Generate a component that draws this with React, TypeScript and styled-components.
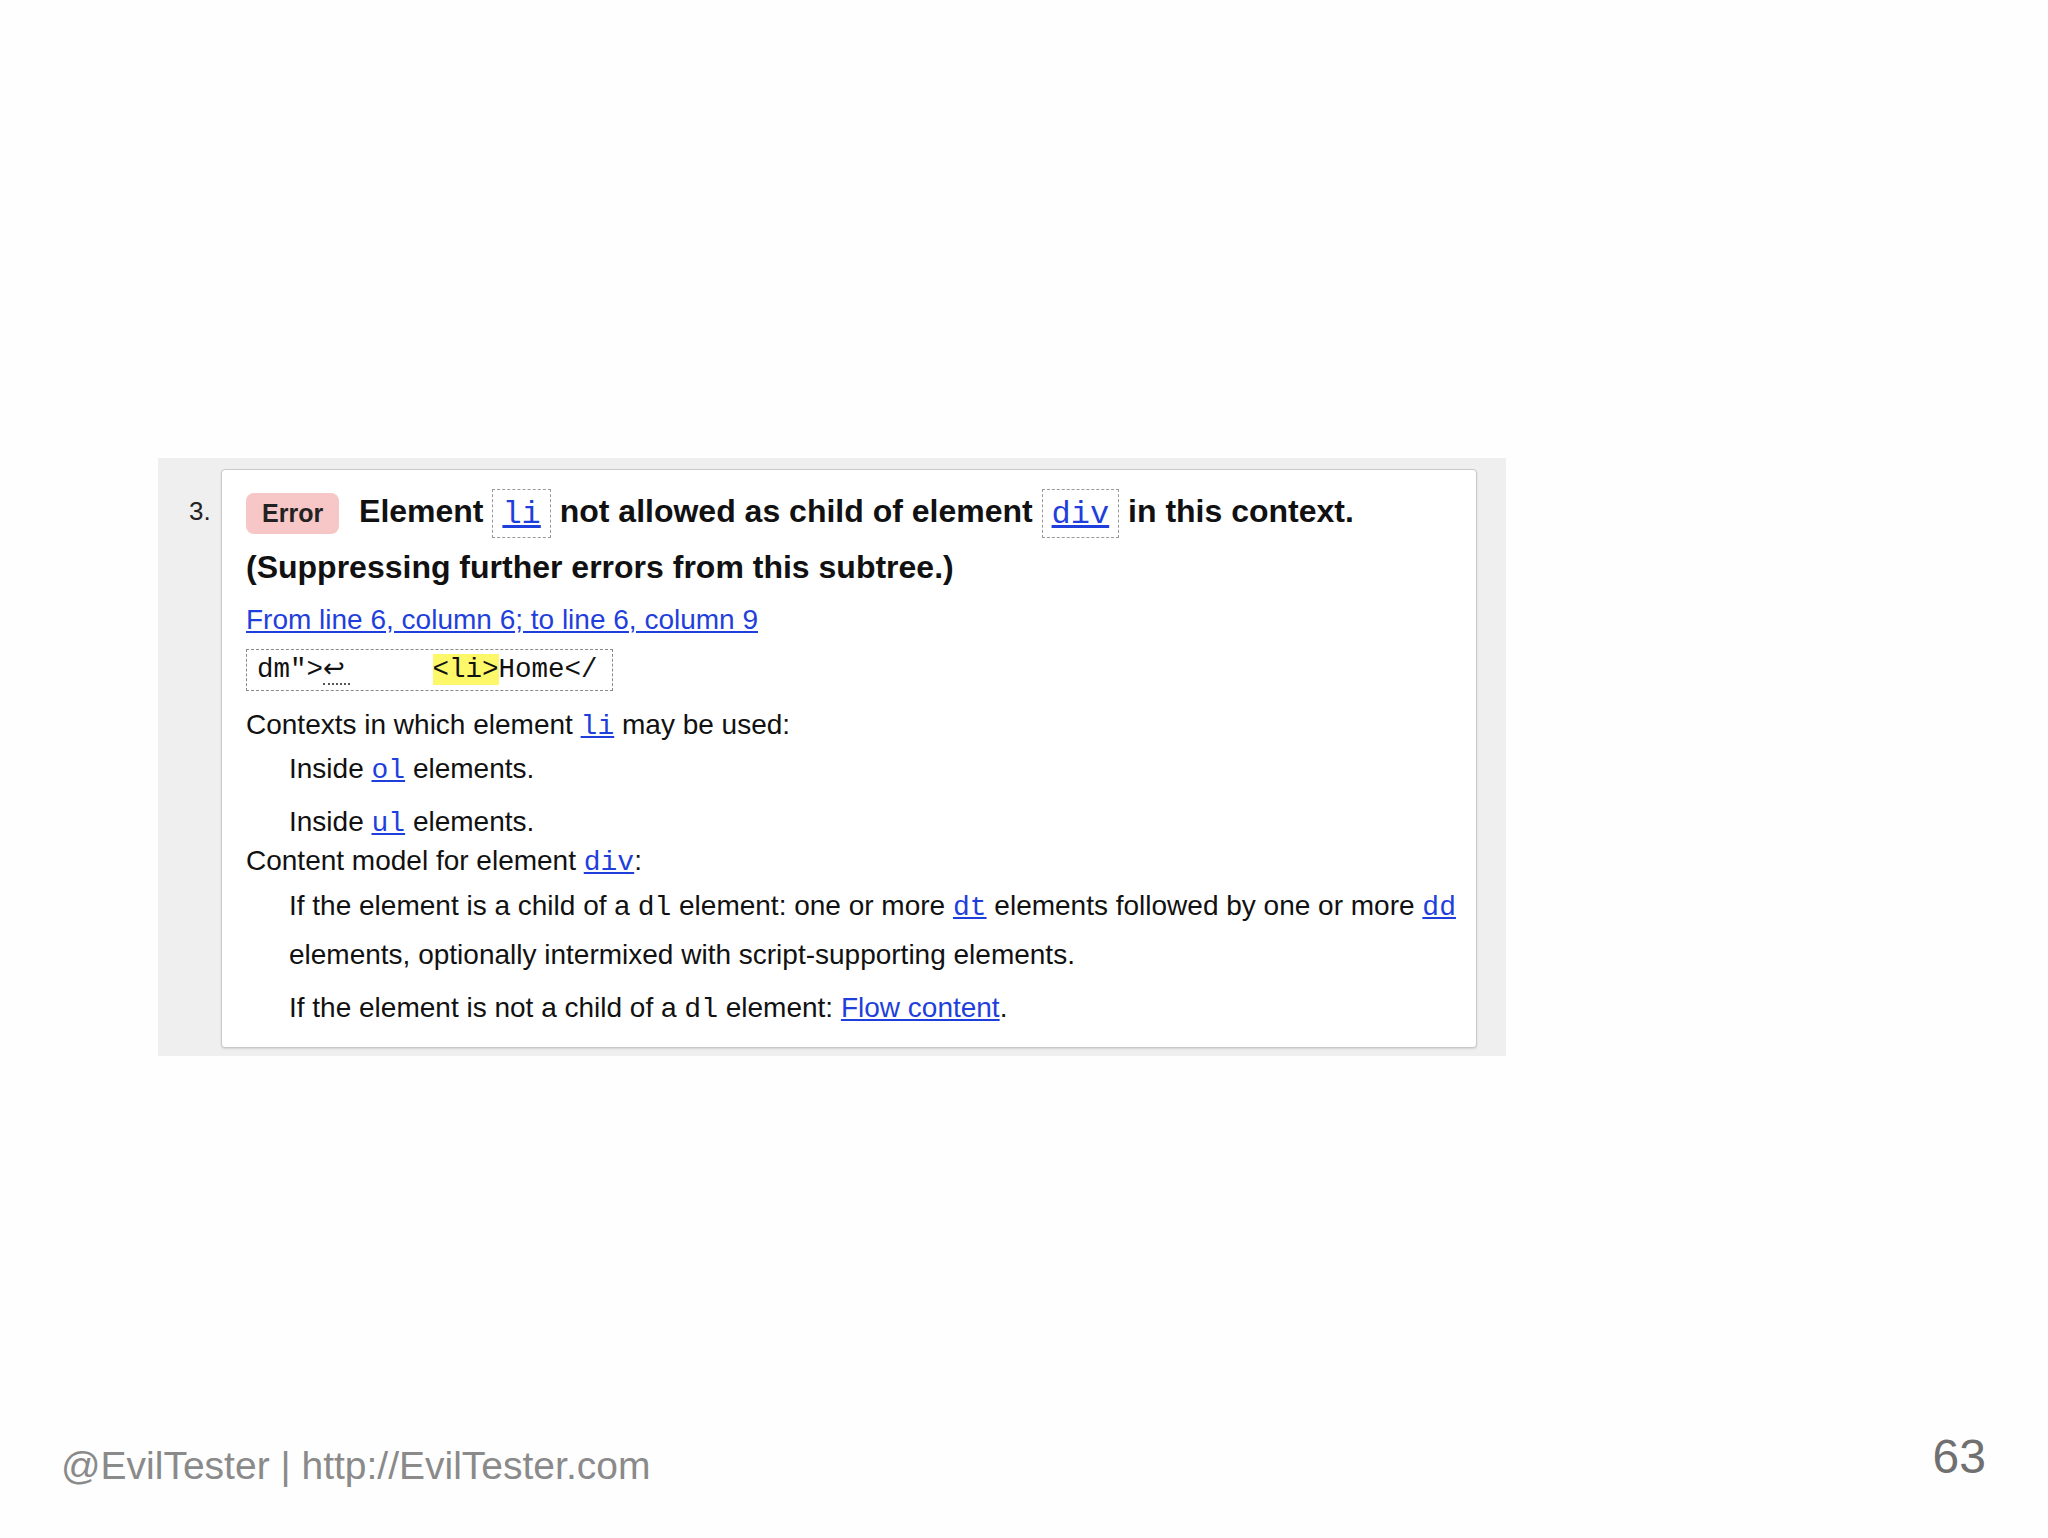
import styled, { createGlobalStyle } from "styled-components";

const GlobalStyle = createGlobalStyle`
  html, body {
    margin: 0;
    padding: 0;
    background: #fefefe;
  }
`;

const LINK = "#1f3fdc";

function App(): JSX.Element {
  return (
    <Slide>
      <GlobalStyle />
      <Frame>
        <Number>3.</Number>
        <Card>
          <Heading>
            <Badge>Error</Badge> Element{" "}
            <CodeRef><MonoLink href="#">li</MonoLink></CodeRef> not allowed as child of element{" "}
            <CodeRef><MonoLink href="#">div</MonoLink></CodeRef> in this context. (Suppressing further errors from this subtree.)
          </Heading>
          <Location href="#">From line 6, column 6; to line 6, column 9</Location>
          <Extract>
            dm"&gt;<Return>↩</Return>{"     "}<Mark>&lt;li&gt;</Mark>Home&lt;/
          </Extract>
          <Details>
            <Term $lh={42}>Contexts in which element <MonoLink href="#">li</MonoLink> may be used:</Term>
            <DefList $gap={9} $lh={42}>
              <Def>Inside <MonoLink href="#">ol</MonoLink> elements.</Def>
              <Def>Inside <MonoLink href="#">ul</MonoLink> elements.</Def>
            </DefList>
            <Term $lh={39} $pull={4}>Content model for element <MonoLink href="#">div</MonoLink>:</Term>
            <DefList $gap={6} $lh={47}>
              <Def>
                If the element is a child of a <Mono>dl</Mono> element: one or more <MonoLink href="#">dt</MonoLink> elements followed by one or more <MonoLink href="#">dd</MonoLink>
                <br />
                elements, optionally intermixed with script-supporting elements.
              </Def>
              <Def>
                If the element is not a child of a <Mono>dl</Mono> element: <TextLink href="#">Flow content</TextLink>.
              </Def>
            </DefList>
          </Details>
        </Card>
      </Frame>
      <Spacer />
      <Footer>
        <Credit>@EvilTester | http://EvilTester.com</Credit>
        <PageNo>63</PageNo>
      </Footer>
    </Slide>
  );
}

const Slide = styled.div`
  width: 2048px;
  height: 1538px;
  box-sizing: border-box;
  padding-top: 458px;
  display: flex;
  flex-direction: column;
  font-family: "Liberation Sans", Arial, sans-serif;
  color: #111;
`;
const Frame = styled.div`
  margin-left: 158px;
  width: 1348px;
  box-sizing: border-box;
  display: flex;
  background: #efefef;
  padding: 11px 29px 8px 0;
`;
const Number = styled.div`
  width: 63px;
  flex-shrink: 0;
  box-sizing: border-box;
  padding: 14px 0 0 31px;
  font-size: 26px;
  line-height: 56px;
  color: #222;
`;
const Card = styled.div`
  flex: 1;
  background: #fff;
  border: 1px solid #c9c9c9;
  border-radius: 4px;
  box-shadow: 0 1px 2px rgba(0, 0, 0, 0.12);
  padding: 13px 20px 14px 24px;
  display: flex;
  flex-direction: column;
  align-items: flex-start;
`;
const Heading = styled.div`
  font-size: 32px;
  font-weight: 700;
  line-height: 56px;
  color: #111;
`;
const Badge = styled.span`
  display: inline-block;
  vertical-align: middle;
  height: 41px;
  line-height: 41px;
  padding: 0 16px;
  margin-right: 11px;
  border-radius: 8px;
  background: #f7c6c6;
  color: #222;
  font-size: 25px;
  font-weight: 700;
`;
const CodeRef = styled.span`
  display: inline-block;
  vertical-align: middle;
  border: 1px dashed #9a9a9a;
  padding: 0 9px;
  line-height: 45px;
  font-weight: 400;
`;
const MonoLink = styled.a`
  font-family: "Liberation Mono", "Courier New", monospace;
  color: ${LINK};
  text-decoration: underline;
`;
const Mono = styled.span`
  font-family: "Liberation Mono", "Courier New", monospace;
`;
const TextLink = styled.a`
  color: ${LINK};
  text-decoration: underline;
`;
const Location = styled(TextLink)`
  margin-top: 5px;
  font-size: 28px;
  line-height: 40px;
`;
const Extract = styled.div`
  margin-top: 9px;
  height: 42px;
  box-sizing: border-box;
  border: 1px dashed #8a8a8a;
  padding: 0 10px;
  width: 367px;
  font-family: "Liberation Mono", "Courier New", monospace;
  font-size: 27.5px;
  line-height: 40px;
  white-space: pre;
  color: #111;
`;
const Return = styled.span`
  display: inline-block;
  width: 27px;
  line-height: 30px;
  font-family: "DejaVu Sans", sans-serif;
  font-size: 26px;
  border-bottom: 2px dotted #555;
`;
const Mark = styled.span`
  background: #fdf76a;
`;
const Details = styled.div`
  margin-top: 13px;
  font-size: 28px;
  display: flex;
  flex-direction: column;
  align-self: stretch;
`;
const Term = styled.div<{ $lh: number; $pull?: number }>`
  line-height: ${(p) => p.$lh}px;
  margin-top: ${(p) => -(p.$pull ?? 0)}px;
`;
const DefList = styled.div<{ $gap: number; $lh: number }>`
  display: flex;
  flex-direction: column;
  gap: ${(p) => p.$gap}px;
  padding-left: 43px;
  line-height: ${(p) => p.$lh}px;
`;
const Def = styled.div``;
const Spacer = styled.div`
  flex: 1;
`;
const Footer = styled.div`
  display: flex;
  justify-content: space-between;
  align-items: center;
  padding: 0 62px 41px 61px;
`;
const Credit = styled.span`
  font-size: 39px;
  line-height: 39px;
  color: #8a8a8a;
`;
const PageNo = styled.span`
  font-size: 48px;
  line-height: 48px;
  color: #707070;
  margin-bottom: 16px;
`;

export default App;
